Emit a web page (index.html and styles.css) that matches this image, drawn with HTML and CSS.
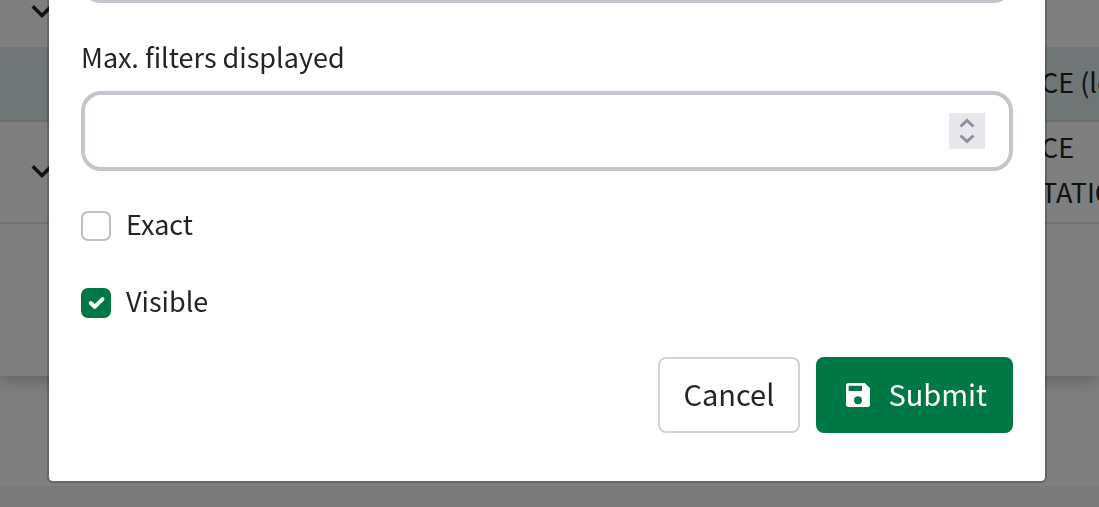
FILE: index.html
```html
<!DOCTYPE html>
<html lang="en">
<head>
<meta charset="utf-8">
<title>Edit filter</title>
<link rel="stylesheet" href="styles.css">
</head>
<body>
<div class="page">
  <main class="panel">
    <div class="row row-first">
      <svg class="chevron" viewBox="0 0 24 24"><path d="M7.41 8.58 12 13.17l4.59-4.59L18 10l-6 6-6-6z"/></svg>
    </div>
    <div class="row row-active"><p class="cell">CE (le</p></div>
    <div class="row row-tall">
      <svg class="chevron" viewBox="0 0 24 24"><path d="M7.41 8.58 12 13.17l4.59-4.59L18 10l-6 6-6-6z"/></svg>
      <p class="cell">CE<br>TATIO</p>
    </div>
    <div class="panel-end"></div>
  </main>
  <footer class="footer"></footer>
</div>
<div class="overlay">
  <form class="modal" role="dialog" aria-label="Edit filter">
    <input class="box" type="text" aria-label="Filter value">
    <div class="field">
      <label for="max">Max. filters displayed</label>
      <div class="box">
        <input class="number" id="max" type="number">
        <div class="spinner">
          <button class="step" type="button" aria-label="Increase"><svg viewBox="0 0 36 18"><path d="M11.500 13.500 18 7.500l6.500 6"/></svg></button>
          <button class="step" type="button" aria-label="Decrease"><svg viewBox="0 0 36 18"><path d="M11.500 4.500 18 10.500l6.500-6"/></svg></button>
        </div>
      </div>
    </div>
    <label class="check"><input type="checkbox"><span class="text">Exact</span></label>
    <label class="check"><input type="checkbox" checked><span class="text">Visible</span></label>
    <div class="actions">
      <button class="btn" type="button"><span class="text">Cancel</span></button>
      <button class="btn btn-primary" type="submit">
        <svg class="save" viewBox="0 0 24 24"><path d="M15 9H5V5h10m-3 14a3 3 0 0 1-3-3 3 3 0 0 1 3-3 3 3 0 0 1 3 3 3 3 0 0 1-3 3m5-16H5a2 2 0 0 0-2 2v14a2 2 0 0 0 2 2h14a2 2 0 0 0 2-2V7z"/></svg>
        <span class="text">Submit</span>
      </button>
    </div>
  </form>
</div>
</body>
</html>
```
FILE: styles.css
```css
* { box-sizing: border-box; }

body {
  margin: 0;
  overflow: hidden;
  color: #212529;
  font: 27px/45px "Noto Sans CJK SC", "Open Sans", sans-serif;
}

.page {
  display: flex;
  flex-direction: column;
  height: 100vh;
  background: #fefefe;
}

.panel {
  background: #fff;
  box-shadow: 0 4px 16px rgba(0, 0, 0, 0.25);
}

.row {
  display: flex;
  align-items: center;
  height: 102px;
  padding: 0 0 2px 21px;
  border-bottom: 2px solid #dee2e6;
  overflow: hidden;
}

.row-first {
  height: 49px;
  align-items: flex-end;
  padding-bottom: 15px;
  border-color: #e2e6e8;
}

.row-active {
  height: 73px;
  background: #e0ebec;
  border-color: #d2dadc;
}

.chevron {
  flex: none;
  width: 42px;
  height: 42px;
  fill: #212529;
}

.cell {
  width: 58px;
  margin: 0 0 0 auto;
  padding-bottom: 4px;
  white-space: nowrap;
}

.panel-end { height: 152px; }

.footer {
  height: 21px;
  margin-top: auto;
  background: #f4f4f4;
}

.overlay {
  position: fixed;
  inset: 0;
  display: flex;
  align-items: flex-end;
  padding: 0 52px 24px 47px;
  background: rgba(0, 0, 0, 0.5);
}

.modal {
  flex: 1;
  display: flex;
  flex-direction: column;
  gap: 32px;
  padding: 32px 32px 48px;
  border: 2px solid rgba(0, 0, 0, 0.2);
  border-radius: 6px;
  background: #fff;
  background-clip: padding-box;
}

.field {
  display: flex;
  flex-direction: column;
  gap: 12px;
  line-height: 44px;
}

.box {
  display: flex;
  align-items: center;
  width: 100%;
  height: 80px;
  padding: 0 24px;
  border: 4px solid #c3c6cc;
  border-radius: 20px;
  background: #fff;
}

.number {
  flex: 1;
  min-width: 0;
  border: 0;
  outline: 0;
  background: none;
  font: inherit;
  appearance: textfield;
}

.number::-webkit-inner-spin-button { appearance: none; }

.spinner {
  width: 36px;
  background: #e8e7ec;
}

.step {
  display: block;
  width: 100%;
  height: 18px;
  padding: 0;
  border: 0;
  background: none;
}

.step svg {
  display: block;
  fill: none;
  stroke: #8f8d9e;
  stroke-width: 3;
}

.check {
  display: flex;
  align-items: center;
  gap: 15px;
  height: 45px;
}

.text { padding-bottom: 4px; }

.check input {
  width: 30px;
  height: 30px;
  margin: 0;
  border: 2px solid #bfbfbf;
  border-radius: 7px;
  background: #fff;
  appearance: none;
}

.check input:checked {
  border-color: #007846;
  background: #007846 url("data:image/svg+xml,%3Csvg xmlns='http://www.w3.org/2000/svg' viewBox='0 0 20 20'%3E%3Cpath fill='none' stroke='%23fff' stroke-linecap='round' stroke-linejoin='round' stroke-width='3' d='m6 10 3 3 6-6'/%3E%3C/svg%3E") center / 26px no-repeat;
}

.actions {
  display: flex;
  justify-content: flex-end;
  gap: 16px;
}

.btn {
  display: flex;
  align-items: center;
  gap: 16px;
  height: 76px;
  padding: 0 24px;
  border: 2px solid #ced4da;
  border-radius: 8px;
  background: #fff;
  color: #212529;
  font: inherit;
  font-size: 29px;
}

.btn-primary {
  gap: 14px;
  border-color: #007846;
  background: #007846;
  color: #fff;
}

.save {
  width: 32px;
  height: 32px;
  fill: currentColor;
}
```
